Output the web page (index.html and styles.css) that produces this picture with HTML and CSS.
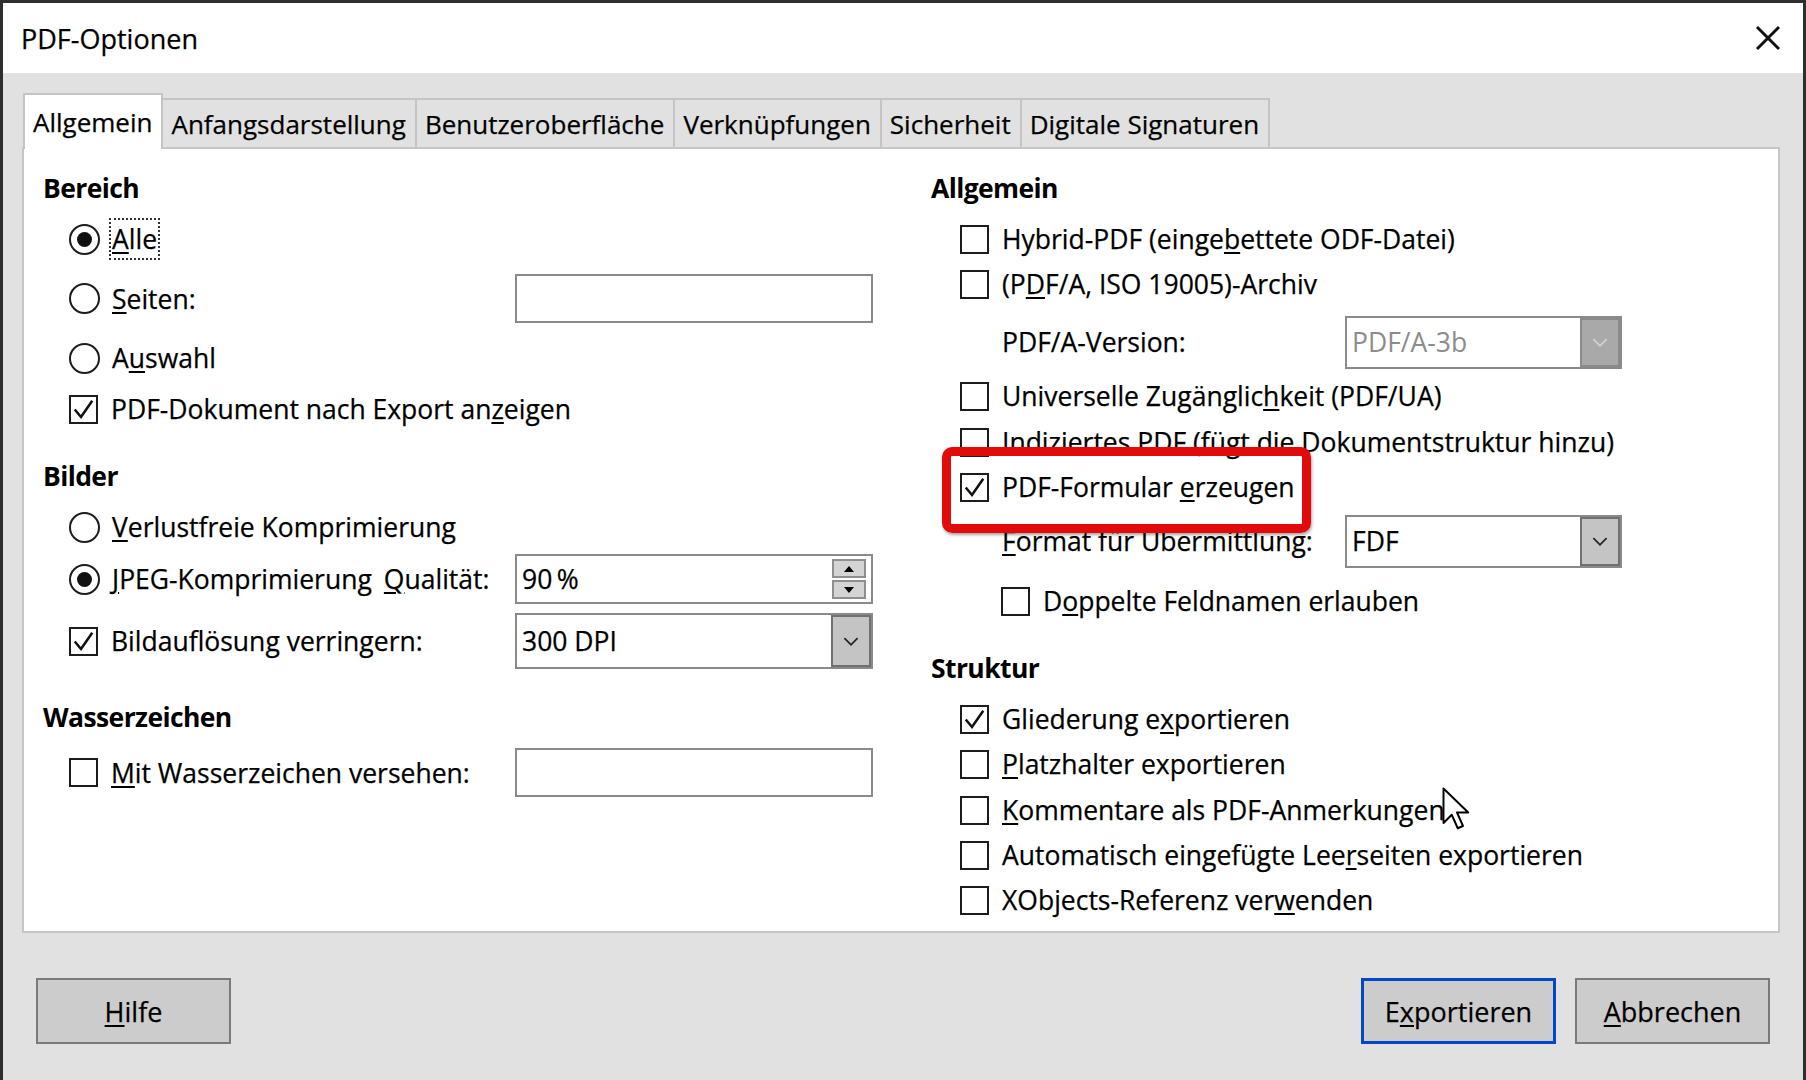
FILE: index.html
```html
<!DOCTYPE html>
<html lang="de">
<head>
<meta charset="UTF-8" />
<title>PDF-Optionen</title>
<link rel="stylesheet" href="styles.css">
</head>
<body>
  <div class="window">
    <div class="titlebar">
      <span class="title">PDF-Optionen</span>
      <svg class="close" viewBox="0 0 26 26"><path d="M2 2 L24 24 M24 2 L2 24" stroke="#111" stroke-width="3"/></svg>
    </div>

    <div class="content">
      <div class="tabs">
        <div class="tab active">Allgemein</div>
        <div class="tab">Anfangsdarstellung</div>
        <div class="tab">Benutzeroberfläche</div>
        <div class="tab">Verknüpfungen</div>
        <div class="tab">Sicherheit</div>
        <div class="tab">Digitale Signaturen</div>
      </div>

      <div class="panel">
        <div class="col col-left">
          <div class="heading">Bereich</div>
          <div class="row sp6">
            <label class="opt"><span class="radio on"></span><span class="focus"><u>A</u>lle</span></label>
          </div>
          <div class="row field-row sp12">
            <label class="opt"><span class="radio"></span><span><u>S</u>eiten:</span></label>
            <div class="field"></div>
          </div>
          <div class="row sp12">
            <label class="opt"><span class="radio"></span><span>A<u>u</u>swahl</span></label>
          </div>
          <div class="row sp6">
            <label class="opt"><span class="check on"><svg viewBox="0 0 20 20"><path d="M3 10 L8 16 L17 3"/></svg></span><span>PDF-Dokument nach Export an<u>z</u>eigen</span></label>
          </div>

          <div class="heading section">Bilder</div>
          <div class="row sp6">
            <label class="opt"><span class="radio"></span><span><u>V</u>erlustfreie Komprimierung</span></label>
          </div>
          <div class="row field-row sp4">
            <label class="opt"><span class="radio on"></span><span><u>J</u>PEG-Komprimierung</span><span class="quality"><u>Q</u>ualität:</span></label>
            <div class="field spin">
              <span class="value">90&#8201;%</span>
              <span class="spin-btns">
                <span class="spin-btn"><svg viewBox="0 0 12 8"><path d="M6 1 L11 7 L1 7 Z"/></svg></span>
                <span class="spin-btn"><svg viewBox="0 0 12 8"><path d="M1 1 L11 1 L6 7 Z"/></svg></span>
              </span>
            </div>
          </div>
          <div class="row field-row sp8">
            <label class="opt"><span class="check on"><svg viewBox="0 0 20 20"><path d="M3 10 L8 16 L17 3"/></svg></span><span>Bildauflösun<u>g</u> verringern:</span></label>
            <div class="field combo tall">
              <span class="value">300 DPI</span>
              <span class="drop"><svg viewBox="0 0 16 10"><path d="M2 2 L8 8 L14 2"/></svg></span>
            </div>
          </div>

          <div class="heading section far">Wasserzeichen</div>
          <div class="row field-row sp8">
            <label class="opt"><span class="check"></span><span><u>M</u>it Wasserzeichen versehen:</span></label>
            <div class="field"></div>
          </div>
        </div>

        <div class="col col-right">
          <div class="heading">Allgemein</div>
          <label class="opt sp6"><span class="check"></span><span>Hybrid-PDF (einge<u>b</u>ettete ODF-Datei)</span></label>
          <label class="opt"><span class="check"></span><span>(P<u>D</u>F/A, ISO 19005)-Archiv</span></label>
          <div class="combo-row sp8">
            <span>PDF/A-Version:</span>
            <div class="field combo disabled">
              <span class="value">PDF/A-3b</span>
              <span class="drop"><svg viewBox="0 0 16 10"><path d="M2 2 L8 8 L14 2"/></svg></span>
            </div>
          </div>
          <label class="opt sp4"><span class="check"></span><span>Universelle Zugänglic<u>h</u>keit (PDF/UA)</span></label>
          <label class="opt sp1"><span class="check"></span><span>Indiziertes PDF (fügt die Dokumentstruktur hinzu)</span></label>
          <label class="opt"><span class="check on"><svg viewBox="0 0 20 20"><path d="M3 10 L8 16 L17 3"/></svg></span><span>PDF-Formular <u>e</u>rzeugen</span></label>
          <div class="combo-row sp4">
            <span><u>F</u>ormat für Übermittlung:</span>
            <div class="field combo">
              <span class="value">FDF</span>
              <span class="drop"><svg viewBox="0 0 16 10"><path d="M2 2 L8 8 L14 2"/></svg></span>
            </div>
          </div>
          <label class="opt sub sp10"><span class="check"></span><span>D<u>o</u>ppelte Feldnamen erlauben</span></label>

          <div class="heading section">Struktur</div>
          <label class="opt sp6"><span class="check on"><svg viewBox="0 0 20 20"><path d="M3 10 L8 16 L17 3"/></svg></span><span>Gliederung e<u>x</u>portieren</span></label>
          <label class="opt"><span class="check"></span><span><u>P</u>latzhalter exportieren</span></label>
          <label class="opt sp1"><span class="check"></span><span><u>K</u>ommentare als PDF-Anmerkungen</span></label>
          <label class="opt"><span class="check"></span><span>Automatisch eingefügte Lee<u>r</u>seiten exportieren</span></label>
          <label class="opt"><span class="check"></span><span>XObjects-Referenz ver<u>w</u>enden</span></label>
        </div>
      </div>

      <div class="buttons">
        <button class="btn"><u>H</u>ilfe</button>
        <div class="btn-group">
          <button class="btn default">E<u>x</u>portieren</button>
          <button class="btn"><u>A</u>bbrechen</button>
        </div>
      </div>
    </div>
  </div>

  <div class="highlight"></div>
  <svg class="cursor" viewBox="0 0 20 30"><path d="M1 1 L1 24 L6.5 18.5 L10.5 27.5 L14 26 L10 17 L17.5 17 Z" fill="#fff" stroke="#000" stroke-width="1.3" stroke-linejoin="round"/></svg>
</body>
</html>
```

FILE: styles.css
```css
* {
  box-sizing: border-box;
}

body {
  margin: 0;
  width: 1806px;
  height: 1080px;
  overflow: hidden;
  position: relative;
  font-family: "Open Sans", "Noto Sans", sans-serif;
  font-size: 26.5px;
  color: #000;
  background: #e1e1e1;
  -webkit-text-stroke: 0.25px #000;
}

.window {
  height: 1080px;
  border: 3px solid #2e2e2e;
  border-bottom: none;
  background: #e1e1e1;
}

.titlebar {
  height: 70px;
  background: #fff;
  display: flex;
  align-items: center;
  justify-content: space-between;
  padding: 0 22px 0 18px;
  font-size: 27px;
}

.close {
  width: 26px;
  height: 26px;
}

.content {
  padding: 20px 23px 0 19px;
}

/* tabs */
.tabs {
  display: flex;
  align-items: flex-end;
  height: 54px;
  padding-left: 1px;
}

.tab {
  height: 49px;
  padding: 0 9px 0 8px;
  font-size: 26px;
  display: flex;
  align-items: center;
  background: #e1e1e1;
  border: 2px solid #c4c4c4;
  border-bottom: none;
  margin-left: -2px;
}

.tab:first-child {
  margin-left: 0;
}

.tab.active {
  height: 56px;
  background: #fff;
  margin-bottom: -2px;
  position: relative;
  z-index: 1;
}

.panel {
  height: 786px;
  background: #fff;
  border: 2px solid #c6c6c6;
  display: flex;
  padding: 17px 0 0 19px;
}

/* columns */
.col {
  display: flex;
  flex-direction: column;
  gap: 1px;
}

.col-left {
  width: 830px;
}

.col-right {
  margin-left: 58px;
}

.heading {
  height: 44px;
  display: flex;
  align-items: center;
  font-weight: 700;
  letter-spacing: -0.6px;
  -webkit-text-stroke: 0;
}

.heading.section {
  margin-top: 22px;
}

.heading.far {
  margin-top: 25px;
}

.sp1 { margin-top: 1px; }
.sp4 { margin-top: 4px; }
.sp6 { margin-top: 6px; }
.sp8 { margin-top: 8px; }
.sp10 { margin-top: 10px; }
.sp12 { margin-top: 12px; }

.row {
  display: flex;
  align-items: center;
  height: 44px;
}

.row.field-row {
  height: auto;
}

.field-row .opt {
  width: 472px;
  flex: none;
}

.field-row .field {
  width: 358px;
}

.opt {
  display: flex;
  align-items: center;
  height: 44px;
  white-space: nowrap;
  padding-left: 26px;
}

.col-right .opt {
  padding-left: 29px;
}

.col-right .sub {
  padding-left: 70px;
}

u {
  text-decoration-thickness: 2px;
  text-underline-offset: 3px;
}

.radio {
  width: 31px;
  height: 31px;
  border: 2px solid #1c1c1c;
  border-radius: 50%;
  margin-right: 12px;
  display: flex;
  align-items: center;
  justify-content: center;
  flex: none;
}

.radio.on::after {
  content: "";
  width: 15px;
  height: 15px;
  border-radius: 50%;
  background: #111;
}

.check {
  width: 29px;
  height: 29px;
  border: 2px solid #1c1c1c;
  margin-right: 13px;
  flex: none;
  display: flex;
}

.check svg {
  width: 25px;
  height: 25px;
}

.check path {
  fill: none;
  stroke: #111;
  stroke-width: 2;
}

.focus {
  outline: 2px dotted #333;
  outline-offset: 1px;
}

.quality {
  margin-left: 12px;
}

/* inputs */
.field {
  height: 49px;
  border: 2px solid #8a8a8a;
  background: #fff;
  display: flex;
  align-items: center;
  flex: none;
}

.value {
  flex: 1;
  padding-left: 5px;
}

.spin {
  height: 50px;
  padding-right: 5px;
}

.spin-btns {
  display: flex;
  flex-direction: column;
  gap: 2px;
}

.spin-btn {
  width: 34px;
  height: 19px;
  background: #d4d4d4;
  border: 2px solid #8f8f8f;
  display: flex;
  align-items: center;
  justify-content: center;
}

.spin-btn svg {
  width: 12px;
  height: 8px;
}

.combo {
  height: 53px;
}

.combo.tall {
  height: 56px;
}

.drop {
  width: 40px;
  height: 100%;
  background: #c4c4c4;
  border: 2px solid #707070;
  display: flex;
  align-items: center;
  justify-content: center;
}

.drop svg {
  width: 18px;
  height: 11px;
}

.drop path {
  fill: none;
  stroke: #222;
  stroke-width: 1.6;
}

.combo.disabled {
  border-color: #8a8a8a;
  color: #8c8c8c;
  -webkit-text-stroke: 0;
}

.combo.disabled .drop {
  background: #a9a9a9;
  border-color: #8a8a8a;
}

.combo.disabled .drop path {
  stroke: #d2d2d2;
}

.combo-row {
  display: grid;
  grid-template-columns: 343px 277px;
  align-items: center;
  height: 54px;
  padding-left: 71px;
}

/* footer */
.buttons {
  display: flex;
  justify-content: space-between;
  margin-top: 45px;
  padding: 0 10px 0 14px;
}

.btn-group {
  display: flex;
  gap: 19px;
}

.btn {
  width: 195px;
  height: 66px;
  font-family: inherit;
  font-size: 27px;
  color: #000;
  background: #cccccc;
  border: 2px solid #7a7a7a;
  padding: 0;
  -webkit-text-stroke: 0.25px #000;
}

.btn.default {
  border: 3px solid #0048c6;
}

.highlight {
  position: absolute;
  left: 942px;
  top: 447px;
  width: 369px;
  height: 86px;
  border: 9px solid #e10b0b;
  border-radius: 10px;
  box-shadow: 1px 2px 3px rgba(0, 0, 0, 0.35);
}

.cursor {
  position: absolute;
  left: 1442px;
  top: 787px;
  width: 30px;
  height: 45px;
}
```
